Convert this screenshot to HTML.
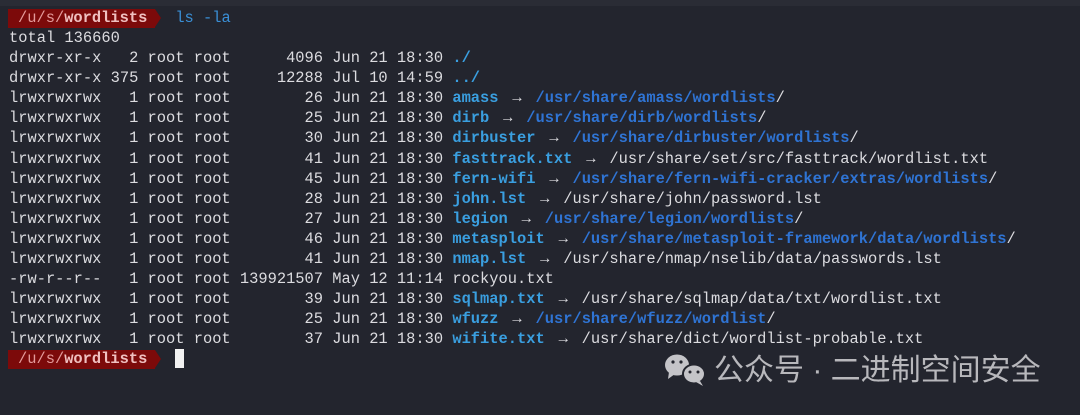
<!DOCTYPE html>
<html><head><meta charset="utf-8"><style>
html,body{margin:0;padding:0;}
body{width:1080px;height:415px;background:#23252e;overflow:hidden;position:relative;font-family:"Liberation Mono",monospace;}
.top{position:absolute;left:0;top:0;width:1080px;height:6px;background:#2a2c35;}
pre{position:absolute;left:9px;top:8px;margin:0;font-family:"Liberation Mono",monospace;font-size:15.4px;line-height:20.08px;color:#dcdce0;letter-spacing:0;}
.c{color:#3a9fe0;font-weight:bold;}
.b{color:#2f74d4;font-weight:bold;}
.cmd{color:#3a8fd6;}
.a{display:inline-block;width:18.5px;text-align:center;}
.p{display:inline-block;background:#7c0a0a;color:#e49a9a;height:19px;line-height:19px;position:relative;padding:0 8px 0 10px;margin-left:-1px;margin-right:20px;}
.p b{color:#f0c0c0;}
.p:after{content:"";position:absolute;right:-6px;top:0;border-left:6px solid #7c0a0a;border-top:9.5px solid transparent;border-bottom:9.5px solid transparent;}
.cur{display:inline-block;width:9px;height:19px;background:#f2f2f2;vertical-align:top;}
.wm{position:absolute;left:714px;top:351px;font-family:"Liberation Sans","Noto Sans CJK SC",sans-serif;font-size:30px;color:#b8b8bc;line-height:40px;}
</style></head><body>
<div class="top"></div>
<pre><span class="p">/u/s/<b>wordlists</b></span><span class="cmd">ls -la</span>
total 136660
drwxr-xr-x   2 root root      4096 Jun 21 18:30 <span class="c">./</span>
drwxr-xr-x 375 root root     12288 Jul 10 14:59 <span class="c">../</span>
lrwxrwxrwx   1 root root        26 Jun 21 18:30 <span class="c">amass</span> <span class="a">→</span> <span class="b">/usr/share/amass/wordlists</span>/
lrwxrwxrwx   1 root root        25 Jun 21 18:30 <span class="c">dirb</span> <span class="a">→</span> <span class="b">/usr/share/dirb/wordlists</span>/
lrwxrwxrwx   1 root root        30 Jun 21 18:30 <span class="c">dirbuster</span> <span class="a">→</span> <span class="b">/usr/share/dirbuster/wordlists</span>/
lrwxrwxrwx   1 root root        41 Jun 21 18:30 <span class="c">fasttrack.txt</span> <span class="a">→</span> /usr/share/set/src/fasttrack/wordlist.txt
lrwxrwxrwx   1 root root        45 Jun 21 18:30 <span class="c">fern-wifi</span> <span class="a">→</span> <span class="b">/usr/share/fern-wifi-cracker/extras/wordlists</span>/
lrwxrwxrwx   1 root root        28 Jun 21 18:30 <span class="c">john.lst</span> <span class="a">→</span> /usr/share/john/password.lst
lrwxrwxrwx   1 root root        27 Jun 21 18:30 <span class="c">legion</span> <span class="a">→</span> <span class="b">/usr/share/legion/wordlists</span>/
lrwxrwxrwx   1 root root        46 Jun 21 18:30 <span class="c">metasploit</span> <span class="a">→</span> <span class="b">/usr/share/metasploit-framework/data/wordlists</span>/
lrwxrwxrwx   1 root root        41 Jun 21 18:30 <span class="c">nmap.lst</span> <span class="a">→</span> /usr/share/nmap/nselib/data/passwords.lst
-rw-r--r--   1 root root 139921507 May 12 11:14 rockyou.txt
lrwxrwxrwx   1 root root        39 Jun 21 18:30 <span class="c">sqlmap.txt</span> <span class="a">→</span> /usr/share/sqlmap/data/txt/wordlist.txt
lrwxrwxrwx   1 root root        25 Jun 21 18:30 <span class="c">wfuzz</span> <span class="a">→</span> <span class="b">/usr/share/wfuzz/wordlist</span>/
lrwxrwxrwx   1 root root        37 Jun 21 18:30 <span class="c">wifite.txt</span> <span class="a">→</span> /usr/share/dict/wordlist-probable.txt
<span class="p">/u/s/<b>wordlists</b></span><span class="cur"></span></pre>
<svg style="position:absolute;left:664px;top:352px" width="44" height="36" viewBox="0 0 44 36">
<ellipse cx="13" cy="13" rx="12" ry="10.5" fill="#c4c4c8"/>
<path d="M5 20 L4 27 L11 22 Z" fill="#c4c4c8"/>
<ellipse cx="30" cy="22" rx="11" ry="9.5" stroke="#23252e" stroke-width="2" fill="#c4c4c8"/>
<path d="M36 29 L39 34 L32 30 Z" fill="#c4c4c8"/>
<circle cx="9" cy="10" r="1.6" fill="#23252e"/><circle cx="17" cy="10" r="1.6" fill="#23252e"/>
<circle cx="26" cy="20" r="1.5" fill="#23252e"/><circle cx="34" cy="20" r="1.5" fill="#23252e"/>
</svg>
<div class="wm">公众号 · 二进制空间安全</div>
</body></html>
